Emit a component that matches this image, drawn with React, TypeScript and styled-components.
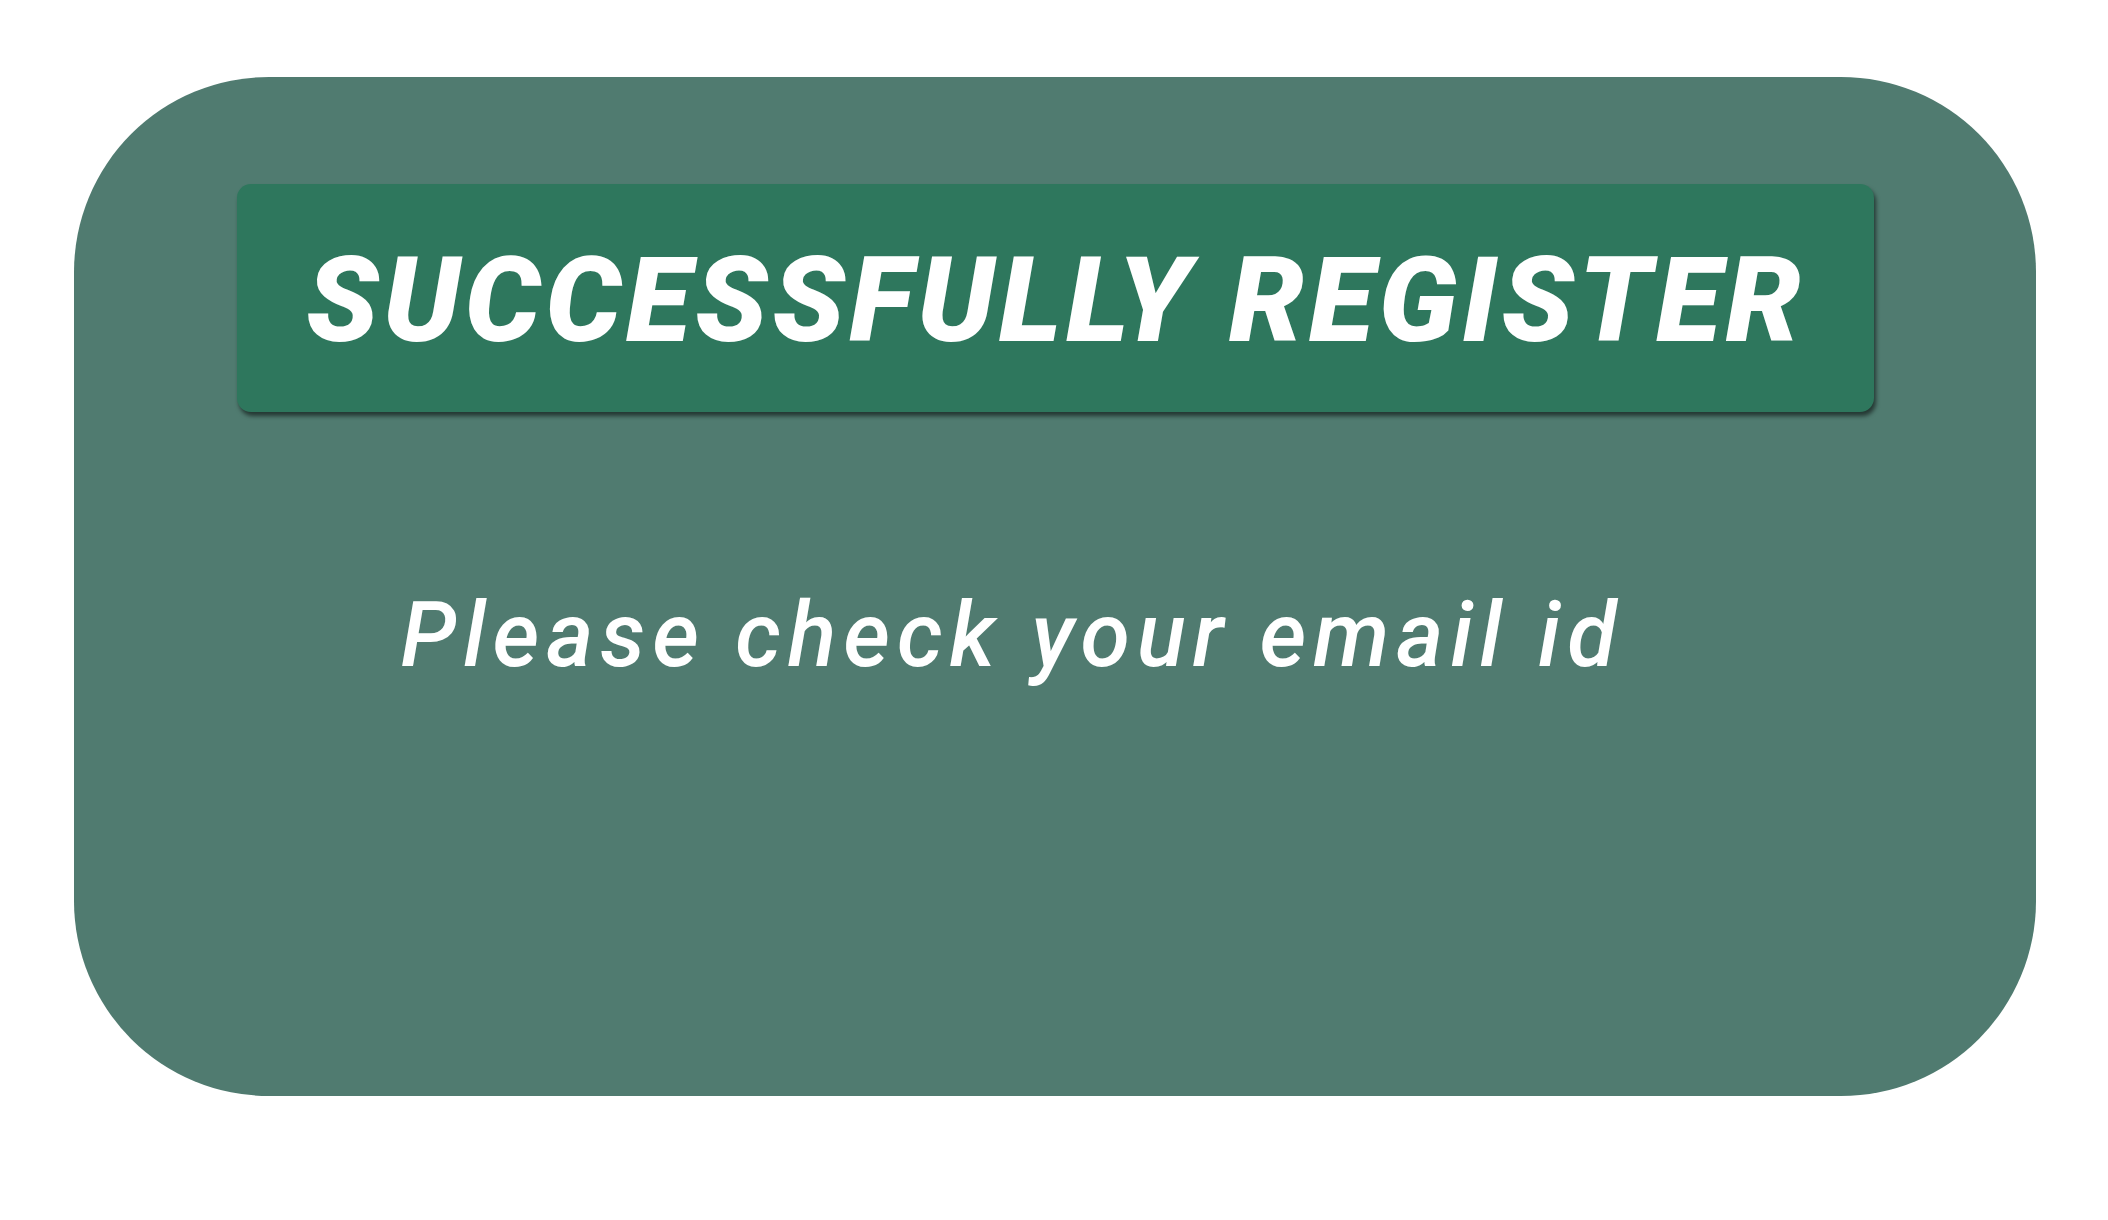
import React from "react";
import styled, { createGlobalStyle } from "styled-components";

const Global = createGlobalStyle`
  html, body {
    margin: 0;
    padding: 0;
    background: #ffffff;
    font-family: Roboto, "Liberation Sans", sans-serif;
  }
`;

const Page = styled.div`
  width: 2108px;
  height: 1220px;
  box-sizing: border-box;
  padding: 77px 0 0 74px;
`;

const Card = styled.section`
  width: 1962px;
  height: 1019px;
  box-sizing: border-box;
  background: #507b70;
  border-radius: 195px;
  padding-top: 107px;
  display: flex;
  flex-direction: column;
  align-items: center;
`;

const Banner = styled.div`
  width: 1637px;
  height: 228px;
  box-sizing: border-box;
  padding-top: 4px;
  background: #2e775d;
  border-radius: 14px;
  box-shadow: 2px 4px 4px rgba(0, 0, 0, 0.55);
  display: flex;
  align-items: center;
  justify-content: center;
`;

const Title = styled.h1`
  margin: 0 0 0 2px;
  font-family: Roboto, "Liberation Sans", sans-serif;
  font-style: italic;
  font-weight: 900;
  font-size: 119px;
  line-height: 1;
  letter-spacing: 4.8px;
  color: #ffffff;
  white-space: nowrap;
`;

const Message = styled.p`
  margin: 179px 86px 0 0;
  font-family: Roboto, "Liberation Sans", sans-serif;
  font-style: italic;
  font-weight: 500;
  font-size: 90px;
  line-height: 1;
  letter-spacing: 7px;
  color: #ffffff;
  white-space: nowrap;
`;

export default function App() {
  return (
    <>
      <Global />
      <Page>
        <Card>
          <Banner>
            <Title>SUCCESSFULLY REGISTER</Title>
          </Banner>
          <Message>Please check your email id</Message>
        </Card>
      </Page>
    </>
  );
}
